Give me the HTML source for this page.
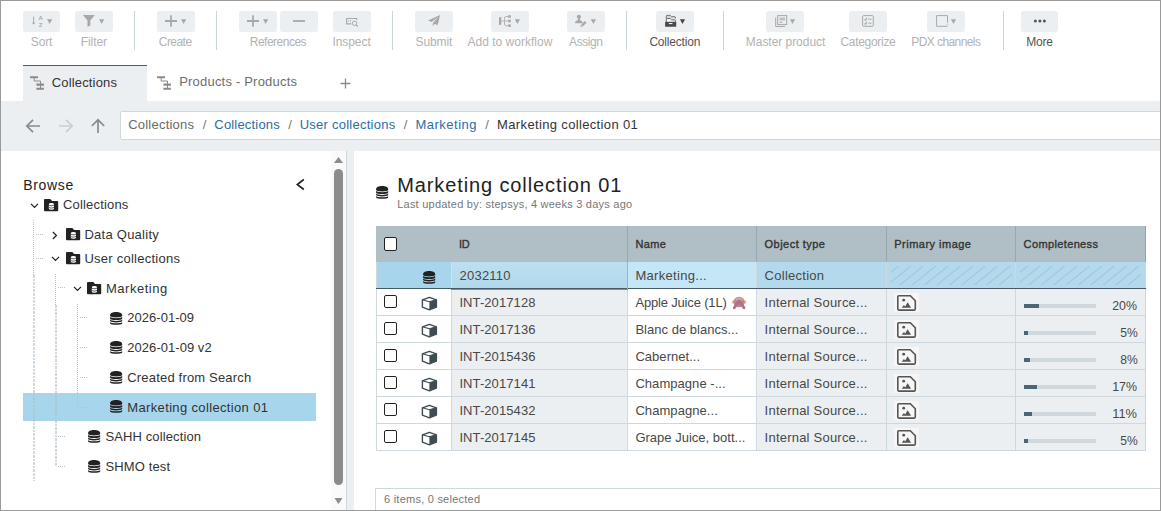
<!DOCTYPE html>
<html lang="en"><head><meta charset="utf-8"><title>Collections</title>
<style>
*{box-sizing:border-box;margin:0;padding:0}
html,body{width:1161px;height:511px;overflow:hidden;background:#fff}
body{font-family:"Liberation Sans",sans-serif;font-size:13px;color:#333;position:relative}
.abs{position:absolute;display:block}
.t{position:absolute;white-space:pre}
.emo{font-size:13px;line-height:17px;color:transparent;width:15px;height:17px;overflow:hidden}
#frame{position:absolute;left:0;top:0;width:1161px;height:511px;border:1px solid #9a9a9a;z-index:50}
.tb{position:absolute;top:11px;height:21px;background:#eceff1;border-radius:2.5px}
.tb svg{display:block}
.sep{position:absolute;top:11px;width:1px;height:39px;background:#cad5da}
#tab1{position:absolute;left:23px;top:65px;width:124px;height:36px;background:#eceff1;border-top:1.5px solid #126cab}
#nav{position:absolute;left:0;top:101px;width:1161px;height:50px;background:#eceff1}
#crumb{position:absolute;left:120px;top:111px;width:1060px;height:29px;background:#fff;border:1px solid #cfd8dc;border-radius:2px}
#left{position:absolute;left:0;top:151px;width:347px;height:360px;background:#fff;border-right:1px solid #cfd8dc}
#mid{position:absolute;left:347px;top:151px;width:7px;height:360px;background:#eceff1}
#right{position:absolute;left:354px;top:151px;width:807px;height:360px;background:#fff}
</style></head>
<body>
<div class="tb" style="left:23px;width:37px"><svg width="37" height="21" viewBox="0 0 37 21"><path d="M10.6 5.6v7.3M9.1 11.5l1.5 1.7 1.5-1.7" stroke="#a8a8a8" stroke-width="1" fill="none"/><text x="15.6" y="9" font-family="Liberation Sans,sans-serif" font-size="6" font-weight="bold" fill="#a8a8a8">A</text><text x="15.8" y="15.6" font-family="Liberation Sans,sans-serif" font-size="6" font-weight="bold" fill="#a8a8a8">Z</text><path d="M24 8.3h5.2l-2.6 4.7z" fill="#a8a8a8"/></svg></div>
<div class="tb" style="left:75px;width:38px"><svg width="38" height="21" viewBox="0 0 38 21"><path d="M7.9 4h12l-4.6 5.6v5l-2.8 1.3v-6.3z" fill="#a8a8a8"/><path d="M24 8.3h5.2l-2.6 4.7z" fill="#a8a8a8"/></svg></div>
<div class="tb" style="left:157px;width:38px"><svg width="38" height="21" viewBox="0 0 38 21"><path d="M8 10h12M14 4.3v11.4" stroke="#a8a8a8" stroke-width="1.8" fill="none"/><path d="M24 8.3h5.2l-2.6 4.7z" fill="#a8a8a8"/></svg></div>
<div class="tb" style="left:239px;width:38px"><svg width="38" height="21" viewBox="0 0 38 21"><path d="M8 10h12M14 4.3v11.4" stroke="#a8a8a8" stroke-width="1.8" fill="none"/><path d="M24 8.3h5.2l-2.6 4.7z" fill="#a8a8a8"/></svg></div>
<div class="tb" style="left:280px;width:38px"><svg width="38" height="21" viewBox="0 0 38 21"><path d="M13 10h12" stroke="#a8a8a8" stroke-width="1.8" fill="none"/></svg></div>
<div class="tb" style="left:333px;width:38px"><svg width="38" height="21" viewBox="0 0 38 21"><path d="M23.7 9V7.5h-10.1v5.4h4.8" stroke="#a8a8a8" stroke-width="1.1" fill="none"/><circle cx="21.6" cy="12.3" r="2.2" stroke="#a8a8a8" stroke-width="1" fill="none"/><path d="M23.2 13.9l1.7 1.7" stroke="#a8a8a8" stroke-width="1.1"/><rect x="15" y="9.3" width="1" height="1.2" fill="#a8a8a8"/><rect x="17" y="9.3" width="1" height="1.2" fill="#a8a8a8"/></svg></div>
<div class="tb" style="left:415px;width:38px"><svg width="38" height="21" viewBox="0 0 38 21"><path d="M25.1 4.1L13 9.4l3.7 1.5 6.3-4.8-5 5.8-.5 3.3 2-2.3 3.2 1z" fill="#a8a8a8"/></svg></div>
<div class="tb" style="left:491px;width:38px"><svg width="38" height="21" viewBox="0 0 38 21"><rect x="8" y="6.2" width="2.3" height="7.7" fill="#a8a8a8"/><path d="M10.3 10h7M17.2 5.5h-2q-1.7 0-1.7 1.7v5.8q0 1.7 1.7 1.7h2" stroke="#b4b4b4" stroke-width="1" fill="none"/><rect x="17.2" y="4.2" width="2.6" height="2.6" fill="#a8a8a8"/><rect x="17.2" y="8.7" width="2.6" height="2.6" fill="#a8a8a8"/><rect x="17.2" y="13.4" width="2.6" height="2.6" fill="#a8a8a8"/><path d="M23.8 8.3h5.2l-2.6 4.7z" fill="#a8a8a8"/></svg></div>
<div class="tb" style="left:567px;width:38px"><svg width="38" height="21" viewBox="0 0 38 21"><circle cx="11.9" cy="5.8" r="2.1" fill="#a8a8a8"/><path d="M8 12.3q0-2.5 2.8-3V7.5h2.2v1.8q2.8.5 2.8 3z" fill="#a8a8a8"/><path d="M14.8 14.8l3.9-3.9" stroke="#a8a8a8" stroke-width="2.3"/><path d="M13.3 16.2l.5-1.9 1.4 1.4z" fill="#a8a8a8"/><path d="M23.8 8.3h5.2l-2.6 4.7z" fill="#a8a8a8"/></svg></div>
<div class="tb" style="left:656px;width:38px"><svg width="38" height="21" viewBox="0 0 38 21"><path d="M10.3 7.6v-2.6q0-.6.6-.6h3.3l1.3 1.3h3.3q.6 0 .6.6v1.3" stroke="#666" stroke-width=".9" fill="#d5d8da"/><path d="M10.3 10.8v-2.6q0-.6.6-.6h3.3l1.3 1.3h3.3q.6 0 .6.6v1.3" stroke="#555" stroke-width=".9" fill="#fff"/><rect x="9.1" y="10.8" width="11.1" height="5" rx=".5" fill="#4a4a4a"/><rect x="12.8" y="12.1" width="3.6" height="1" fill="#fff"/><path d="M23.9 8.3h5.2l-2.6 4.7z" fill="#444"/></svg></div>
<div class="tb" style="left:766px;width:38px"><svg width="38" height="21" viewBox="0 0 38 21"><rect x="11.7" y="4.6" width="9" height="9" stroke="#a8a8a8" stroke-width="1" fill="none"/><path d="M9.7 6.5v9h9.3" stroke="#a8a8a8" stroke-width="1" fill="none"/><rect x="13.5" y="6.5" width="5.5" height="3" fill="#c0c0c0"/><rect x="13.5" y="10.8" width="3" height="1" fill="#a8a8a8"/><path d="M23.9 8.3h5.2l-2.6 4.7z" fill="#a8a8a8"/></svg></div>
<div class="tb" style="left:849px;width:38px"><svg width="38" height="21" viewBox="0 0 38 21"><rect x="13.6" y="4.6" width="10.7" height="10.7" rx="1" stroke="#a8a8a8" stroke-width="1" fill="none"/><path d="M15.6 8.3l.9 1 1.4-2.4M15.6 12.3l.9 1 1.4-2.4" stroke="#a8a8a8" stroke-width="1.1" fill="none"/><path d="M19.3 8.2h3.2M19.3 12.2h3.2" stroke="#a8a8a8" stroke-width="1"/></svg></div>
<div class="tb" style="left:927px;width:38px"><svg width="38" height="21" viewBox="0 0 38 21"><path d="M20.5 11.5v-6.9h-10.9v10.7h10.9" stroke="#a8a8a8" stroke-width="1" fill="none"/><rect x="20" y="12.7" width="1" height="1" fill="#a8a8a8"/><path d="M23.9 8.3h5.2l-2.6 4.7z" fill="#a8a8a8"/></svg></div>
<div class="tb" style="left:1021px;width:37px"><svg width="37" height="21" viewBox="0 0 37 21"><circle cx="14.4" cy="10" r="1.5" fill="#555"/><circle cx="18.9" cy="10" r="1.5" fill="#555"/><circle cx="23.4" cy="10" r="1.5" fill="#555"/></svg></div>
<div class="t" style="left:30.8px;top:34.2px;font-size:12px;line-height:16px;letter-spacing:-0.17px;color:#b2b2b2;">Sort</div>
<div class="t" style="left:80.7px;top:34.2px;font-size:12px;line-height:16px;letter-spacing:-0.07px;color:#b2b2b2;">Filter</div>
<div class="t" style="left:158.8px;top:34.2px;font-size:12px;line-height:16px;letter-spacing:-0.55px;color:#b2b2b2;">Create</div>
<div class="t" style="left:249.8px;top:34.2px;font-size:12px;line-height:16px;letter-spacing:-0.51px;color:#b2b2b2;">References</div>
<div class="t" style="left:332.5px;top:34.2px;font-size:12px;line-height:16px;letter-spacing:-0.08px;color:#b2b2b2;">Inspect</div>
<div class="t" style="left:415.5px;top:34.2px;font-size:12px;line-height:16px;letter-spacing:-0.09px;color:#b2b2b2;">Submit</div>
<div class="t" style="left:467.5px;top:34.2px;font-size:12px;line-height:16px;letter-spacing:0.01px;color:#b2b2b2;">Add to workflow</div>
<div class="t" style="left:569.1px;top:34.2px;font-size:12px;line-height:16px;letter-spacing:-0.45px;color:#b2b2b2;">Assign</div>
<div class="t" style="left:649.4px;top:34.2px;font-size:12px;line-height:16px;letter-spacing:-0.19px;color:#555;">Collection</div>
<div class="t" style="left:745.8px;top:34.2px;font-size:12px;line-height:16px;letter-spacing:-0.04px;color:#b2b2b2;">Master product</div>
<div class="t" style="left:840.5px;top:34.2px;font-size:12px;line-height:16px;letter-spacing:-0.31px;color:#b2b2b2;">Categorize</div>
<div class="t" style="left:911.3px;top:34.2px;font-size:12px;line-height:16px;letter-spacing:-0.58px;color:#b2b2b2;">PDX channels</div>
<div class="t" style="left:1026.3px;top:34.2px;font-size:12px;line-height:16px;letter-spacing:-0.25px;color:#555;">More</div>
<div class="sep" style="left:134px"></div>
<div class="sep" style="left:216px"></div>
<div class="sep" style="left:392px"></div>
<div class="sep" style="left:626px"></div>
<div class="sep" style="left:723px"></div>
<div class="sep" style="left:1003px"></div>
<div id="tab1"></div>
<svg class="abs" style="left:30px;top:76px" width="15" height="14" viewBox="0 0 15 14"><path d="M0 1.2h8M6.4 8.6h7.5M6.4 12.8h7.5" stroke="#8a8a8a" stroke-width="2.1" fill="none"/><path d="M4.2 2v3h6.3v7" stroke="#8a8a8a" stroke-width="1" fill="none"/></svg>
<div class="t" style="left:51.7px;top:73.7px;font-size:13px;line-height:17px;letter-spacing:0.17px;color:#333;">Collections</div>
<svg class="abs" style="left:157px;top:76px" width="15" height="14" viewBox="0 0 15 14"><path d="M0 1.2h8M6.4 8.6h7.5M6.4 12.8h7.5" stroke="#8a8a8a" stroke-width="2.1" fill="none"/><path d="M4.2 2v3h6.3v7" stroke="#8a8a8a" stroke-width="1" fill="none"/></svg>
<div class="t" style="left:179.2px;top:73.4px;font-size:13px;line-height:17px;letter-spacing:0.2px;color:#6e6e6e;">Products - Products</div>
<svg class="abs" style="left:339.4px;top:76.6px" width="13" height="13" viewBox="0 0 13 13"><path d="M1.5 6.5h10M6.5 1.5v10" stroke="#8c8c8c" stroke-width="1.3"/></svg>
<div id="nav"></div>
<svg class="abs" style="left:24px;top:117px" width="84" height="18" viewBox="0 0 84 18"><path d="M16 9H3.3M9 2.8L2.8 9 9 15.2" stroke="#8a8a8a" stroke-width="1.7" fill="none"/><path d="M35 9h12.7M42 2.8L48.2 9 42 15.2" stroke="#c9ced1" stroke-width="1.7" fill="none"/><path d="M74 16V3.3M67.8 9L74 2.8 80.2 9" stroke="#8a8a8a" stroke-width="1.7" fill="none"/></svg>
<div id="crumb"></div>
<div class="t" style="left:128.2px;top:115.6px;font-size:13px;line-height:17px;letter-spacing:0.22px;color:#6a6a6a;">Collections</div>
<div class="t" style="left:202.7px;top:115.6px;font-size:13px;line-height:17px;letter-spacing:0px;color:#777;">/</div>
<div class="t" style="left:214.3px;top:115.6px;font-size:13px;line-height:17px;letter-spacing:0.19px;color:#2a6ea6;">Collections</div>
<div class="t" style="left:288.3px;top:115.6px;font-size:13px;line-height:17px;letter-spacing:0px;color:#777;">/</div>
<div class="t" style="left:299.7px;top:115.6px;font-size:13px;line-height:17px;letter-spacing:0.25px;color:#2a6ea6;">User collections</div>
<div class="t" style="left:403.7px;top:115.6px;font-size:13px;line-height:17px;letter-spacing:0px;color:#777;">/</div>
<div class="t" style="left:415.5px;top:115.6px;font-size:13px;line-height:17px;letter-spacing:0.49px;color:#2a6ea6;">Marketing</div>
<div class="t" style="left:485.3px;top:115.6px;font-size:13px;line-height:17px;letter-spacing:0px;color:#777;">/</div>
<div class="t" style="left:497.1px;top:115.6px;font-size:13px;line-height:17px;letter-spacing:0.35px;color:#333;">Marketing collection 01</div>
<div id="left"></div><div id="mid"></div><div id="right"></div>
<div class="abs" style="left:331px;top:151px;width:15px;height:359px;background:#fafafa"></div>
<div class="abs" style="left:334px;top:169px;width:9px;height:316px;background:#8c8c8c;border-radius:4.5px"></div>
<svg class="abs" style="left:334px;top:156px" width="9" height="8" viewBox="0 0 9 8"><path d="M0 7h9L4.5 1z" fill="#8c8c8c"/></svg>
<svg class="abs" style="left:334px;top:497px" width="9" height="8" viewBox="0 0 9 8"><path d="M.5 1h8L4.5 7z" fill="#8c8c8c"/></svg>
<div class="t" style="left:23.2px;top:175.6px;font-size:14px;line-height:18px;letter-spacing:0.68px;color:#222;">Browse</div>
<svg class="abs" style="left:295px;top:178px" width="11" height="13" viewBox="0 0 11 13"><path d="M8.8 1.5L2.3 6.5l6.5 5" stroke="#222" stroke-width="1.6" fill="none"/></svg>
<div class="abs" style="left:23px;top:393px;width:293px;height:28px;background:#a7d5ec"></div>
<div class="abs" style="left:33px;top:220px;width:1px;height:55px;background:repeating-linear-gradient(#b9c3c8 0 1px,transparent 1px 2px)"></div>
<div class="abs" style="left:33px;top:275px;width:2px;height:206px;background:repeating-linear-gradient(rgba(176,192,202,.6) 0 2.6px,transparent 2.6px 3.6px)"></div>
<div class="abs" style="left:55px;top:274px;width:1px;height:31px;background:repeating-linear-gradient(#b9c3c8 0 1px,transparent 1px 2px)"></div>
<div class="abs" style="left:55px;top:305px;width:2px;height:162px;background:repeating-linear-gradient(rgba(176,192,202,.6) 0 2.6px,transparent 2.6px 3.6px)"></div>
<div class="abs" style="left:77px;top:304px;width:1px;height:103px;background:repeating-linear-gradient(#b9c3c8 0 1px,transparent 1px 2px)"></div>
<svg class="abs" style="left:29.5px;top:202.5px" width="9" height="6" viewBox="0 0 9 6"><path d="M1 .9L4.5 4.4 8 .9" stroke="#222" stroke-width="1.25" fill="none"/></svg>
<svg class="abs" style="left:44px;top:199px" width="15" height="13" viewBox="0 0 15 13"><path d="M0 1q0-1 1-1h4.8q.8 0 1.3.7l.9 1.3h5.2q1 0 1 1v8.2q0 1-1 1H1q-1 0-1-1z" fill="#222"/><ellipse cx="7.4" cy="5.3" rx="2.6" ry="1.3" fill="#fff"/><path d="M4.8 6.2v3.3q0 1.3 2.6 1.3t2.6-1.3V6.2q-.6 1-2.6 1t-2.6-1z" fill="#fff"/><path d="M4.8 8.1q.6 1 2.6 1t2.6-1" stroke="#222" stroke-width=".7" fill="none"/></svg>
<div class="t" style="left:62.9px;top:195.7px;font-size:13px;line-height:17px;letter-spacing:0.19px;color:#333;">Collections</div>
<div class="abs" style="left:36px;top:234px;width:8px;height:1px;background:repeating-linear-gradient(90deg,#b9c3c8 0 1px,transparent 1px 2px)"></div>
<svg class="abs" style="left:51.5px;top:230.5px" width="6" height="9" viewBox="0 0 6 9"><path d="M.9 1L4.4 4.5.9 8" stroke="#222" stroke-width="1.25" fill="none"/></svg>
<svg class="abs" style="left:66px;top:228px" width="15" height="13" viewBox="0 0 15 13"><path d="M0 1q0-1 1-1h4.8q.8 0 1.3.7l.9 1.3h5.2q1 0 1 1v8.2q0 1-1 1H1q-1 0-1-1z" fill="#222"/><ellipse cx="7.4" cy="5.3" rx="2.6" ry="1.3" fill="#fff"/><path d="M4.8 6.2v3.3q0 1.3 2.6 1.3t2.6-1.3V6.2q-.6 1-2.6 1t-2.6-1z" fill="#fff"/><path d="M4.8 8.1q.6 1 2.6 1t2.6-1" stroke="#222" stroke-width=".7" fill="none"/></svg>
<div class="t" style="left:84.4px;top:225.9px;font-size:13px;line-height:17px;letter-spacing:0.26px;color:#333;">Data Quality</div>
<div class="abs" style="left:36px;top:258px;width:8px;height:1px;background:repeating-linear-gradient(90deg,#b9c3c8 0 1px,transparent 1px 2px)"></div>
<svg class="abs" style="left:50.7px;top:256px" width="9" height="6" viewBox="0 0 9 6"><path d="M1 .9L4.5 4.4 8 .9" stroke="#222" stroke-width="1.25" fill="none"/></svg>
<svg class="abs" style="left:66px;top:252px" width="15" height="13" viewBox="0 0 15 13"><path d="M0 1q0-1 1-1h4.8q.8 0 1.3.7l.9 1.3h5.2q1 0 1 1v8.2q0 1-1 1H1q-1 0-1-1z" fill="#222"/><ellipse cx="7.4" cy="5.3" rx="2.6" ry="1.3" fill="#fff"/><path d="M4.8 6.2v3.3q0 1.3 2.6 1.3t2.6-1.3V6.2q-.6 1-2.6 1t-2.6-1z" fill="#fff"/><path d="M4.8 8.1q.6 1 2.6 1t2.6-1" stroke="#222" stroke-width=".7" fill="none"/></svg>
<div class="t" style="left:84.4px;top:250.2px;font-size:13px;line-height:17px;letter-spacing:0.25px;color:#333;">User collections</div>
<div class="abs" style="left:58px;top:287px;width:8px;height:1px;background:repeating-linear-gradient(90deg,#b9c3c8 0 1px,transparent 1px 2px)"></div>
<svg class="abs" style="left:72.6px;top:286.2px" width="9" height="6" viewBox="0 0 9 6"><path d="M1 .9L4.5 4.4 8 .9" stroke="#222" stroke-width="1.25" fill="none"/></svg>
<svg class="abs" style="left:87px;top:282.2px" width="15" height="13" viewBox="0 0 15 13"><path d="M0 1q0-1 1-1h4.8q.8 0 1.3.7l.9 1.3h5.2q1 0 1 1v8.2q0 1-1 1H1q-1 0-1-1z" fill="#222"/><ellipse cx="7.4" cy="5.3" rx="2.6" ry="1.3" fill="#fff"/><path d="M4.8 6.2v3.3q0 1.3 2.6 1.3t2.6-1.3V6.2q-.6 1-2.6 1t-2.6-1z" fill="#fff"/><path d="M4.8 8.1q.6 1 2.6 1t2.6-1" stroke="#222" stroke-width=".7" fill="none"/></svg>
<div class="t" style="left:106px;top:280px;font-size:13px;line-height:17px;letter-spacing:0.52px;color:#333;">Marketing</div>
<div class="abs" style="left:80px;top:317px;width:8px;height:1px;background:repeating-linear-gradient(90deg,#b9c3c8 0 1px,transparent 1px 2px)"></div>
<svg class="abs" style="left:110px;top:311.5px" width="13" height="14" viewBox="0 0 13 14"><path transform="translate(.1 .1)" d="M0 3C0 1.3 2.7 0 6.05 0S12.1 1.3 12.1 3V3.9c-.8 1.1-3 1.4-6.05 1.4S.8 5 0 3.9zM0 4.7c.8 1.1 3 1.4 6.05 1.4s5.25-.3 6.05-1.4V6.6c-.8 1.1-3 1.4-6.05 1.4S.8 7.7 0 6.6zM0 7.4c.8 1.1 3 1.4 6.05 1.4s5.25-.3 6.05-1.4V9c-.8 1.1-3 1.4-6.05 1.4S.8 10.1 0 9zM0 9.8c.8 1.1 3 1.4 6.05 1.4s5.25-.3 6.05-1.4V11.3c-.8 1.1-3 1.4-6.05 1.4S.8 12.4 0 11.3z" fill="#222"/></svg>
<div class="t" style="left:127.3px;top:308.7px;font-size:13px;line-height:17px;letter-spacing:0.02px;color:#333;">2026-01-09</div>
<div class="abs" style="left:80px;top:347px;width:8px;height:1px;background:repeating-linear-gradient(90deg,#b9c3c8 0 1px,transparent 1px 2px)"></div>
<svg class="abs" style="left:110px;top:340.9px" width="13" height="14" viewBox="0 0 13 14"><path transform="translate(.1 .1)" d="M0 3C0 1.3 2.7 0 6.05 0S12.1 1.3 12.1 3V3.9c-.8 1.1-3 1.4-6.05 1.4S.8 5 0 3.9zM0 4.7c.8 1.1 3 1.4 6.05 1.4s5.25-.3 6.05-1.4V6.6c-.8 1.1-3 1.4-6.05 1.4S.8 7.7 0 6.6zM0 7.4c.8 1.1 3 1.4 6.05 1.4s5.25-.3 6.05-1.4V9c-.8 1.1-3 1.4-6.05 1.4S.8 10.1 0 9zM0 9.8c.8 1.1 3 1.4 6.05 1.4s5.25-.3 6.05-1.4V11.3c-.8 1.1-3 1.4-6.05 1.4S.8 12.4 0 11.3z" fill="#222"/></svg>
<div class="t" style="left:127.3px;top:338.7px;font-size:13px;line-height:17px;letter-spacing:0.04px;color:#333;">2026-01-09 v2</div>
<div class="abs" style="left:80px;top:377px;width:8px;height:1px;background:repeating-linear-gradient(90deg,#b9c3c8 0 1px,transparent 1px 2px)"></div>
<svg class="abs" style="left:110px;top:370.5px" width="13" height="14" viewBox="0 0 13 14"><path transform="translate(.1 .1)" d="M0 3C0 1.3 2.7 0 6.05 0S12.1 1.3 12.1 3V3.9c-.8 1.1-3 1.4-6.05 1.4S.8 5 0 3.9zM0 4.7c.8 1.1 3 1.4 6.05 1.4s5.25-.3 6.05-1.4V6.6c-.8 1.1-3 1.4-6.05 1.4S.8 7.7 0 6.6zM0 7.4c.8 1.1 3 1.4 6.05 1.4s5.25-.3 6.05-1.4V9c-.8 1.1-3 1.4-6.05 1.4S.8 10.1 0 9zM0 9.8c.8 1.1 3 1.4 6.05 1.4s5.25-.3 6.05-1.4V11.3c-.8 1.1-3 1.4-6.05 1.4S.8 12.4 0 11.3z" fill="#222"/></svg>
<div class="t" style="left:127.3px;top:368.5px;font-size:13px;line-height:17px;letter-spacing:0.18px;color:#333;">Created from Search</div>
<div class="abs" style="left:80px;top:407px;width:8px;height:1px;background:repeating-linear-gradient(90deg,#b9c3c8 0 1px,transparent 1px 2px)"></div>
<svg class="abs" style="left:110px;top:400.3px" width="13" height="14" viewBox="0 0 13 14"><path transform="translate(.1 .1)" d="M0 3C0 1.3 2.7 0 6.05 0S12.1 1.3 12.1 3V3.9c-.8 1.1-3 1.4-6.05 1.4S.8 5 0 3.9zM0 4.7c.8 1.1 3 1.4 6.05 1.4s5.25-.3 6.05-1.4V6.6c-.8 1.1-3 1.4-6.05 1.4S.8 7.7 0 6.6zM0 7.4c.8 1.1 3 1.4 6.05 1.4s5.25-.3 6.05-1.4V9c-.8 1.1-3 1.4-6.05 1.4S.8 10.1 0 9zM0 9.8c.8 1.1 3 1.4 6.05 1.4s5.25-.3 6.05-1.4V11.3c-.8 1.1-3 1.4-6.05 1.4S.8 12.4 0 11.3z" fill="#222"/></svg>
<div class="t" style="left:127.3px;top:398.7px;font-size:13px;line-height:17px;letter-spacing:0.35px;color:#333;">Marketing collection 01</div>
<div class="abs" style="left:58px;top:436px;width:8px;height:1px;background:repeating-linear-gradient(90deg,#b9c3c8 0 1px,transparent 1px 2px)"></div>
<svg class="abs" style="left:88px;top:429.8px" width="13" height="14" viewBox="0 0 13 14"><path transform="translate(.1 .1)" d="M0 3C0 1.3 2.7 0 6.05 0S12.1 1.3 12.1 3V3.9c-.8 1.1-3 1.4-6.05 1.4S.8 5 0 3.9zM0 4.7c.8 1.1 3 1.4 6.05 1.4s5.25-.3 6.05-1.4V6.6c-.8 1.1-3 1.4-6.05 1.4S.8 7.7 0 6.6zM0 7.4c.8 1.1 3 1.4 6.05 1.4s5.25-.3 6.05-1.4V9c-.8 1.1-3 1.4-6.05 1.4S.8 10.1 0 9zM0 9.8c.8 1.1 3 1.4 6.05 1.4s5.25-.3 6.05-1.4V11.3c-.8 1.1-3 1.4-6.05 1.4S.8 12.4 0 11.3z" fill="#222"/></svg>
<div class="t" style="left:105.4px;top:428px;font-size:13px;line-height:17px;letter-spacing:0.12px;color:#333;">SAHH collection</div>
<div class="abs" style="left:58px;top:466px;width:8px;height:1px;background:repeating-linear-gradient(90deg,#b9c3c8 0 1px,transparent 1px 2px)"></div>
<svg class="abs" style="left:88px;top:459.9px" width="13" height="14" viewBox="0 0 13 14"><path transform="translate(.1 .1)" d="M0 3C0 1.3 2.7 0 6.05 0S12.1 1.3 12.1 3V3.9c-.8 1.1-3 1.4-6.05 1.4S.8 5 0 3.9zM0 4.7c.8 1.1 3 1.4 6.05 1.4s5.25-.3 6.05-1.4V6.6c-.8 1.1-3 1.4-6.05 1.4S.8 7.7 0 6.6zM0 7.4c.8 1.1 3 1.4 6.05 1.4s5.25-.3 6.05-1.4V9c-.8 1.1-3 1.4-6.05 1.4S.8 10.1 0 9zM0 9.8c.8 1.1 3 1.4 6.05 1.4s5.25-.3 6.05-1.4V11.3c-.8 1.1-3 1.4-6.05 1.4S.8 12.4 0 11.3z" fill="#222"/></svg>
<div class="t" style="left:105.4px;top:457.5px;font-size:13px;line-height:17px;letter-spacing:0.13px;color:#333;">SHMO test</div>
<svg class="abs" style="left:375.8px;top:185.5px" width="13" height="14" viewBox="0 0 13 14"><path transform="translate(.1 .1)" d="M0 3C0 1.3 2.7 0 6.05 0S12.1 1.3 12.1 3V3.9c-.8 1.1-3 1.4-6.05 1.4S.8 5 0 3.9zM0 4.7c.8 1.1 3 1.4 6.05 1.4s5.25-.3 6.05-1.4V6.6c-.8 1.1-3 1.4-6.05 1.4S.8 7.7 0 6.6zM0 7.4c.8 1.1 3 1.4 6.05 1.4s5.25-.3 6.05-1.4V9c-.8 1.1-3 1.4-6.05 1.4S.8 10.1 0 9zM0 9.8c.8 1.1 3 1.4 6.05 1.4s5.25-.3 6.05-1.4V11.3c-.8 1.1-3 1.4-6.05 1.4S.8 12.4 0 11.3z" fill="#222"/></svg>
<div class="t" style="left:397.2px;top:173px;font-size:20px;line-height:24px;letter-spacing:0.89px;color:#222;">Marketing collection 01</div>
<div class="t" style="left:397.2px;top:196.8px;font-size:11px;line-height:15px;letter-spacing:0.23px;color:#777;">Last updated by: stepsys, 4 weeks 3 days ago</div>
<div class="abs" style="left:376px;top:226px;width:770px;height:36px;background:#b0bec5;border-right:1px solid #8fa2ad"></div>
<div class="abs" style="left:627px;top:226px;width:1px;height:36px;background:#97a8b1"></div>
<div class="abs" style="left:756px;top:226px;width:1px;height:36px;background:#97a8b1"></div>
<div class="abs" style="left:886px;top:226px;width:1px;height:36px;background:#97a8b1"></div>
<div class="abs" style="left:1015px;top:226px;width:1px;height:36px;background:#97a8b1"></div>
<div class="abs" style="left:384px;top:237px;width:13px;height:14px;background:#fff;border:1.5px solid #222;border-radius:2px"></div>
<div class="t" style="left:459px;top:236.7px;font-size:11px;line-height:15px;letter-spacing:-0.2px;color:#333;-webkit-text-stroke:.35px #333;">ID</div>
<div class="t" style="left:635.4px;top:236.7px;font-size:11px;line-height:15px;letter-spacing:0.39px;color:#333;-webkit-text-stroke:.35px #333;">Name</div>
<div class="t" style="left:764.6px;top:236.7px;font-size:11px;line-height:15px;letter-spacing:0.46px;color:#333;-webkit-text-stroke:.35px #333;">Object type</div>
<div class="t" style="left:894.3px;top:236.7px;font-size:11px;line-height:15px;letter-spacing:0.48px;color:#333;-webkit-text-stroke:.35px #333;">Primary image</div>
<div class="t" style="left:1023.6px;top:236.7px;font-size:11px;line-height:15px;letter-spacing:0.37px;color:#333;-webkit-text-stroke:.35px #333;">Completeness</div>
<div class="abs" style="left:376px;top:262px;width:770px;height:26px;background:#b4d9ed"></div>
<div class="abs" style="left:376px;top:262px;width:75px;height:26px;background:#a7d5ec"></div>
<div class="abs" style="left:628px;top:262px;width:128px;height:26px;background:#c5e6f6"></div>
<div class="abs" style="left:452px;top:262px;width:175px;height:26px;background:linear-gradient(#bde0f1,#b2d8ec)"></div>
<svg class="abs" style="left:891px;top:266px" width="120.9" height="18.7" viewBox="0 0 120.9 18.7"><path d="M-15.6 18.7L7.5 0M-3.2 18.7L19.9 0M9.2 18.7L32.3 0M21.6 18.7L44.7 0M34 18.7L57.1 0M46.4 18.7L69.5 0M58.8 18.7L81.9 0M71.2 18.7L94.3 0M83.6 18.7L106.7 0M96 18.7L119.1 0M108.4 18.7L131.5 0M120.8 18.7L143.9 0" stroke="#9fcbe0" stroke-width="1.3" stroke-linecap="round" fill="none"/></svg>
<svg class="abs" style="left:1020px;top:266px" width="120.9" height="18.7" viewBox="0 0 120.9 18.7"><path d="M-15.6 18.7L7.5 0M-3.2 18.7L19.9 0M9.2 18.7L32.3 0M21.6 18.7L44.7 0M34 18.7L57.1 0M46.4 18.7L69.5 0M58.8 18.7L81.9 0M71.2 18.7L94.3 0M83.6 18.7L106.7 0M96 18.7L119.1 0M108.4 18.7L131.5 0M120.8 18.7L143.9 0" stroke="#9fcbe0" stroke-width="1.3" stroke-linecap="round" fill="none"/></svg>
<svg class="abs" style="left:423.1px;top:270.5px" width="13" height="14" viewBox="0 0 13 14"><path transform="translate(.1 .1)" d="M0 3C0 1.3 2.7 0 6.05 0S12.1 1.3 12.1 3V3.9c-.8 1.1-3 1.4-6.05 1.4S.8 5 0 3.9zM0 4.7c.8 1.1 3 1.4 6.05 1.4s5.25-.3 6.05-1.4V6.6c-.8 1.1-3 1.4-6.05 1.4S.8 7.7 0 6.6zM0 7.4c.8 1.1 3 1.4 6.05 1.4s5.25-.3 6.05-1.4V9c-.8 1.1-3 1.4-6.05 1.4S.8 10.1 0 9zM0 9.8c.8 1.1 3 1.4 6.05 1.4s5.25-.3 6.05-1.4V11.3c-.8 1.1-3 1.4-6.05 1.4S.8 12.4 0 11.3z" fill="#222"/></svg>
<div class="t" style="left:459.6px;top:266.5px;font-size:13px;line-height:17px;letter-spacing:0.21px;color:#484848;">2032110</div>
<div class="t" style="left:635.4px;top:266.8px;font-size:13px;line-height:17px;letter-spacing:0.31px;color:#484848;">Marketing...</div>
<div class="t" style="left:764.6px;top:266.8px;font-size:13px;line-height:17px;letter-spacing:0.26px;color:#484848;">Collection</div>
<div class="abs" style="left:376px;top:289px;width:770px;height:27px;background:#eceff1;border-bottom:1px solid #cfd8dc"></div>
<div class="abs" style="left:377px;top:289px;width:74px;height:26px;background:#fff"></div>
<div class="abs" style="left:628px;top:289px;width:128px;height:26px;background:#fff"></div>
<div class="abs" style="left:384px;top:295px;width:13px;height:13px;background:#fff;border:1.5px solid #222;border-radius:2px"></div>
<svg class="abs" style="left:421px;top:296.3px" width="17" height="15" viewBox="0 0 17 15"><path d="M8.4 1.3l7 2.5v7.3l-7 2.7-7-2.7V3.8z" fill="#fff" stroke="#3f4c52" stroke-width="1.4" stroke-linejoin="round"/><path d="M1.4 3.8l7 2 7-2" stroke="#3f4c52" stroke-width="1.1" fill="none"/><path d="M8.4 5.8l7-2v7.3l-7 2.7z" fill="#3f4c52"/></svg>
<div class="t" style="left:459.4px;top:293.5px;font-size:13px;line-height:17px;letter-spacing:0.09px;color:#484848;">INT-2017128</div>
<div class="t" style="left:635.4px;top:293.5px;font-size:13px;line-height:17px;letter-spacing:-0.17px;color:#484848;">Apple Juice (1L)</div>
<span class="t emo" style="left:732px;top:294px">🙈</span>
<svg class="abs" style="left:731px;top:296px" width="16" height="14" viewBox="0 0 16 14"><circle cx="2.6" cy="6" r="1.8" fill="#dfb1a8"/><circle cx="13.6" cy="6" r="1.8" fill="#dfb1a8"/><ellipse cx="8.1" cy="6" rx="5.6" ry="5.2" fill="#bd8b80"/><ellipse cx="8.1" cy="3.6" rx="3.6" ry="2" fill="#cfa79b"/><path d="M3.3 11.8L7.4 5.2M12.9 11.8L8.8 5.2" stroke="#b4708a" stroke-width="2.9" stroke-linecap="round"/><path d="M8.1 6.5v3" stroke="#c566a8" stroke-width="1.2"/></svg>
<div class="t" style="left:764.6px;top:293.5px;font-size:13px;line-height:17px;letter-spacing:0.22px;color:#484848;">Internal Source...</div>
<div class="abs" style="left:894px;top:293px;width:25px;height:19px;background:#f6f6f6"></div><svg class="abs" style="left:896px;top:293.5px" width="21" height="18" viewBox="0 0 21 18"><path d="M2.8 1.8h11.5l5 5v8.3q0 1-1 1H2.8q-1 0-1-1V2.8q0-1 1-1z" stroke="#555" stroke-width="1.6" fill="none"/><circle cx="7.7" cy="6.2" r="1.4" fill="#555"/><path d="M5.7 13.8l2.2-2.8 1.3 1.4 2.4-4.2 3.5 5.6z" fill="#555"/></svg>
<div class="abs" style="left:1024px;top:304px;width:72px;height:4px;background:#cfd8dc"></div>
<div class="abs" style="left:1024px;top:304px;width:15px;height:4px;background:#4b6573"></div>
<div class="t" style="left:1111.4px;top:296.7px;font-size:13px;line-height:17px;letter-spacing:0px;color:#484848;transform:scaleX(0.953);transform-origin:100% 50%;">20%</div>
<div class="abs" style="left:376px;top:316px;width:770px;height:27px;background:#eceff1;border-bottom:1px solid #cfd8dc"></div>
<div class="abs" style="left:377px;top:316px;width:74px;height:26px;background:#fff"></div>
<div class="abs" style="left:628px;top:316px;width:128px;height:26px;background:#fff"></div>
<div class="abs" style="left:384px;top:322px;width:13px;height:13px;background:#fff;border:1.5px solid #222;border-radius:2px"></div>
<svg class="abs" style="left:421px;top:323.3px" width="17" height="15" viewBox="0 0 17 15"><path d="M8.4 1.3l7 2.5v7.3l-7 2.7-7-2.7V3.8z" fill="#fff" stroke="#3f4c52" stroke-width="1.4" stroke-linejoin="round"/><path d="M1.4 3.8l7 2 7-2" stroke="#3f4c52" stroke-width="1.1" fill="none"/><path d="M8.4 5.8l7-2v7.3l-7 2.7z" fill="#3f4c52"/></svg>
<div class="t" style="left:459.4px;top:320.5px;font-size:13px;line-height:17px;letter-spacing:0.09px;color:#484848;">INT-2017136</div>
<div class="t" style="left:635.4px;top:320.5px;font-size:13px;line-height:17px;letter-spacing:0.02px;color:#484848;">Blanc de blancs...</div>
<div class="t" style="left:764.6px;top:320.5px;font-size:13px;line-height:17px;letter-spacing:0.22px;color:#484848;">Internal Source...</div>
<div class="abs" style="left:894px;top:320px;width:25px;height:19px;background:#f6f6f6"></div><svg class="abs" style="left:896px;top:320.5px" width="21" height="18" viewBox="0 0 21 18"><path d="M2.8 1.8h11.5l5 5v8.3q0 1-1 1H2.8q-1 0-1-1V2.8q0-1 1-1z" stroke="#555" stroke-width="1.6" fill="none"/><circle cx="7.7" cy="6.2" r="1.4" fill="#555"/><path d="M5.7 13.8l2.2-2.8 1.3 1.4 2.4-4.2 3.5 5.6z" fill="#555"/></svg>
<div class="abs" style="left:1024px;top:331px;width:72px;height:4px;background:#cfd8dc"></div>
<div class="abs" style="left:1024px;top:331px;width:4px;height:4px;background:#4b6573"></div>
<div class="t" style="left:1118.6px;top:323.7px;font-size:13px;line-height:17px;letter-spacing:0px;color:#484848;transform:scaleX(0.931);transform-origin:100% 50%;">5%</div>
<div class="abs" style="left:376px;top:343px;width:770px;height:27px;background:#eceff1;border-bottom:1px solid #cfd8dc"></div>
<div class="abs" style="left:377px;top:343px;width:74px;height:26px;background:#fff"></div>
<div class="abs" style="left:628px;top:343px;width:128px;height:26px;background:#fff"></div>
<div class="abs" style="left:384px;top:349px;width:13px;height:13px;background:#fff;border:1.5px solid #222;border-radius:2px"></div>
<svg class="abs" style="left:421px;top:350.3px" width="17" height="15" viewBox="0 0 17 15"><path d="M8.4 1.3l7 2.5v7.3l-7 2.7-7-2.7V3.8z" fill="#fff" stroke="#3f4c52" stroke-width="1.4" stroke-linejoin="round"/><path d="M1.4 3.8l7 2 7-2" stroke="#3f4c52" stroke-width="1.1" fill="none"/><path d="M8.4 5.8l7-2v7.3l-7 2.7z" fill="#3f4c52"/></svg>
<div class="t" style="left:459.4px;top:347.5px;font-size:13px;line-height:17px;letter-spacing:0.09px;color:#484848;">INT-2015436</div>
<div class="t" style="left:635.4px;top:347.5px;font-size:13px;line-height:17px;letter-spacing:0.04px;color:#484848;">Cabernet...</div>
<div class="t" style="left:764.6px;top:347.5px;font-size:13px;line-height:17px;letter-spacing:0.22px;color:#484848;">Internal Source...</div>
<div class="abs" style="left:894px;top:347px;width:25px;height:19px;background:#f6f6f6"></div><svg class="abs" style="left:896px;top:347.5px" width="21" height="18" viewBox="0 0 21 18"><path d="M2.8 1.8h11.5l5 5v8.3q0 1-1 1H2.8q-1 0-1-1V2.8q0-1 1-1z" stroke="#555" stroke-width="1.6" fill="none"/><circle cx="7.7" cy="6.2" r="1.4" fill="#555"/><path d="M5.7 13.8l2.2-2.8 1.3 1.4 2.4-4.2 3.5 5.6z" fill="#555"/></svg>
<div class="abs" style="left:1024px;top:358px;width:72px;height:4px;background:#cfd8dc"></div>
<div class="abs" style="left:1024px;top:358px;width:6px;height:4px;background:#4b6573"></div>
<div class="t" style="left:1118.6px;top:350.7px;font-size:13px;line-height:17px;letter-spacing:0px;color:#484848;transform:scaleX(0.931);transform-origin:100% 50%;">8%</div>
<div class="abs" style="left:376px;top:370px;width:770px;height:27px;background:#eceff1;border-bottom:1px solid #cfd8dc"></div>
<div class="abs" style="left:377px;top:370px;width:74px;height:26px;background:#fff"></div>
<div class="abs" style="left:628px;top:370px;width:128px;height:26px;background:#fff"></div>
<div class="abs" style="left:384px;top:376px;width:13px;height:13px;background:#fff;border:1.5px solid #222;border-radius:2px"></div>
<svg class="abs" style="left:421px;top:377.3px" width="17" height="15" viewBox="0 0 17 15"><path d="M8.4 1.3l7 2.5v7.3l-7 2.7-7-2.7V3.8z" fill="#fff" stroke="#3f4c52" stroke-width="1.4" stroke-linejoin="round"/><path d="M1.4 3.8l7 2 7-2" stroke="#3f4c52" stroke-width="1.1" fill="none"/><path d="M8.4 5.8l7-2v7.3l-7 2.7z" fill="#3f4c52"/></svg>
<div class="t" style="left:459.4px;top:374.5px;font-size:13px;line-height:17px;letter-spacing:0.09px;color:#484848;">INT-2017141</div>
<div class="t" style="left:635.4px;top:374.5px;font-size:13px;line-height:17px;letter-spacing:0.05px;color:#484848;">Champagne -...</div>
<div class="t" style="left:764.6px;top:374.5px;font-size:13px;line-height:17px;letter-spacing:0.22px;color:#484848;">Internal Source...</div>
<div class="abs" style="left:894px;top:374px;width:25px;height:19px;background:#f6f6f6"></div><svg class="abs" style="left:896px;top:374.5px" width="21" height="18" viewBox="0 0 21 18"><path d="M2.8 1.8h11.5l5 5v8.3q0 1-1 1H2.8q-1 0-1-1V2.8q0-1 1-1z" stroke="#555" stroke-width="1.6" fill="none"/><circle cx="7.7" cy="6.2" r="1.4" fill="#555"/><path d="M5.7 13.8l2.2-2.8 1.3 1.4 2.4-4.2 3.5 5.6z" fill="#555"/></svg>
<div class="abs" style="left:1024px;top:385px;width:72px;height:4px;background:#cfd8dc"></div>
<div class="abs" style="left:1024px;top:385px;width:13px;height:4px;background:#4b6573"></div>
<div class="t" style="left:1111.4px;top:377.7px;font-size:13px;line-height:17px;letter-spacing:0px;color:#484848;transform:scaleX(0.953);transform-origin:100% 50%;">17%</div>
<div class="abs" style="left:376px;top:397px;width:770px;height:27px;background:#eceff1;border-bottom:1px solid #cfd8dc"></div>
<div class="abs" style="left:377px;top:397px;width:74px;height:26px;background:#fff"></div>
<div class="abs" style="left:628px;top:397px;width:128px;height:26px;background:#fff"></div>
<div class="abs" style="left:384px;top:403px;width:13px;height:13px;background:#fff;border:1.5px solid #222;border-radius:2px"></div>
<svg class="abs" style="left:421px;top:404.3px" width="17" height="15" viewBox="0 0 17 15"><path d="M8.4 1.3l7 2.5v7.3l-7 2.7-7-2.7V3.8z" fill="#fff" stroke="#3f4c52" stroke-width="1.4" stroke-linejoin="round"/><path d="M1.4 3.8l7 2 7-2" stroke="#3f4c52" stroke-width="1.1" fill="none"/><path d="M8.4 5.8l7-2v7.3l-7 2.7z" fill="#3f4c52"/></svg>
<div class="t" style="left:459.4px;top:401.5px;font-size:13px;line-height:17px;letter-spacing:0.09px;color:#484848;">INT-2015432</div>
<div class="t" style="left:635.4px;top:401.5px;font-size:13px;line-height:17px;letter-spacing:0.07px;color:#484848;">Champagne...</div>
<div class="t" style="left:764.6px;top:401.5px;font-size:13px;line-height:17px;letter-spacing:0.22px;color:#484848;">Internal Source...</div>
<div class="abs" style="left:894px;top:401px;width:25px;height:19px;background:#f6f6f6"></div><svg class="abs" style="left:896px;top:401.5px" width="21" height="18" viewBox="0 0 21 18"><path d="M2.8 1.8h11.5l5 5v8.3q0 1-1 1H2.8q-1 0-1-1V2.8q0-1 1-1z" stroke="#555" stroke-width="1.6" fill="none"/><circle cx="7.7" cy="6.2" r="1.4" fill="#555"/><path d="M5.7 13.8l2.2-2.8 1.3 1.4 2.4-4.2 3.5 5.6z" fill="#555"/></svg>
<div class="abs" style="left:1024px;top:412px;width:72px;height:4px;background:#cfd8dc"></div>
<div class="abs" style="left:1024px;top:412px;width:8px;height:4px;background:#4b6573"></div>
<div class="t" style="left:1112.3px;top:404.7px;font-size:13px;line-height:17px;letter-spacing:0px;color:#484848;transform:scaleX(0.99);transform-origin:100% 50%;">11%</div>
<div class="abs" style="left:376px;top:424px;width:770px;height:27px;background:#eceff1;border-bottom:1px solid #cfd8dc"></div>
<div class="abs" style="left:377px;top:424px;width:74px;height:26px;background:#fff"></div>
<div class="abs" style="left:628px;top:424px;width:128px;height:26px;background:#fff"></div>
<div class="abs" style="left:384px;top:430px;width:13px;height:13px;background:#fff;border:1.5px solid #222;border-radius:2px"></div>
<svg class="abs" style="left:421px;top:431.3px" width="17" height="15" viewBox="0 0 17 15"><path d="M8.4 1.3l7 2.5v7.3l-7 2.7-7-2.7V3.8z" fill="#fff" stroke="#3f4c52" stroke-width="1.4" stroke-linejoin="round"/><path d="M1.4 3.8l7 2 7-2" stroke="#3f4c52" stroke-width="1.1" fill="none"/><path d="M8.4 5.8l7-2v7.3l-7 2.7z" fill="#3f4c52"/></svg>
<div class="t" style="left:459.4px;top:428.5px;font-size:13px;line-height:17px;letter-spacing:0.09px;color:#484848;">INT-2017145</div>
<div class="t" style="left:635.4px;top:428.5px;font-size:13px;line-height:17px;letter-spacing:0.01px;color:#484848;">Grape Juice, bott...</div>
<div class="t" style="left:764.6px;top:428.5px;font-size:13px;line-height:17px;letter-spacing:0.22px;color:#484848;">Internal Source...</div>
<div class="abs" style="left:894px;top:428px;width:25px;height:19px;background:#f6f6f6"></div><svg class="abs" style="left:896px;top:428.5px" width="21" height="18" viewBox="0 0 21 18"><path d="M2.8 1.8h11.5l5 5v8.3q0 1-1 1H2.8q-1 0-1-1V2.8q0-1 1-1z" stroke="#555" stroke-width="1.6" fill="none"/><circle cx="7.7" cy="6.2" r="1.4" fill="#555"/><path d="M5.7 13.8l2.2-2.8 1.3 1.4 2.4-4.2 3.5 5.6z" fill="#555"/></svg>
<div class="abs" style="left:1024px;top:439px;width:72px;height:4px;background:#cfd8dc"></div>
<div class="abs" style="left:1024px;top:439px;width:4px;height:4px;background:#4b6573"></div>
<div class="t" style="left:1118.6px;top:431.7px;font-size:13px;line-height:17px;letter-spacing:0px;color:#484848;transform:scaleX(0.931);transform-origin:100% 50%;">5%</div>
<div class="abs" style="left:451px;top:262px;width:1px;height:189px;background:#cfd8dc"></div>
<div class="abs" style="left:627px;top:262px;width:1px;height:189px;background:#cfd8dc"></div>
<div class="abs" style="left:756px;top:262px;width:1px;height:189px;background:#cfd8dc"></div>
<div class="abs" style="left:886px;top:262px;width:1px;height:189px;background:#cfd8dc"></div>
<div class="abs" style="left:1015px;top:262px;width:1px;height:189px;background:#cfd8dc"></div>
<div class="abs" style="left:376px;top:262px;width:1px;height:189px;background:#cfd8dc"></div>
<div class="abs" style="left:1145px;top:262px;width:1px;height:189px;background:#cfd8dc"></div>
<div class="abs" style="left:376px;top:288px;width:770px;height:1px;background:#455a66"></div>
<div class="abs" style="left:451px;top:289px;width:177px;height:1px;background:#7d909a"></div>
<div class="abs" style="left:451px;top:262px;width:1px;height:26px;background:#d3e2ea"></div>
<div class="abs" style="left:627px;top:262px;width:1px;height:27px;background:#a3b2ba"></div>
<div class="abs" style="left:375px;top:488px;width:800px;height:30px;border:1px solid #cfd8dc;background:#fff"></div>
<div class="t" style="left:384px;top:491.8px;font-size:11px;line-height:15px;letter-spacing:0.24px;color:#777;">6 items, 0 selected</div>
<div id="frame"></div>
</body></html>
